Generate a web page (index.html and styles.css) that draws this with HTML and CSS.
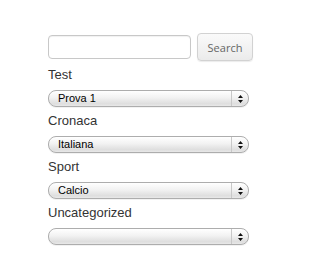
FILE: index.html
```html
<!DOCTYPE html>
<html>
<head>
<meta charset="utf-8">
<link rel="stylesheet" href="styles.css">
</head>
<body>
<div class="page">
  <form class="search-row">
    <input class="search-input" type="text">
    <button class="search-btn" type="button">Search</button>
  </form>
  <div class="field">
    <div class="label">Test</div>
    <div class="select"><span class="value">Prova 1</span><span class="arrows"><svg width="5" height="8" viewBox="0 0 5 8"><path d="M2.5 0 L5 3 L0 3 Z M0 5 L5 5 L2.5 8 Z" fill="#111"/></svg></span></div>
  </div>
  <div class="field">
    <div class="label">Cronaca</div>
    <div class="select"><span class="value">Italiana</span><span class="arrows"><svg width="5" height="8" viewBox="0 0 5 8"><path d="M2.5 0 L5 3 L0 3 Z M0 5 L5 5 L2.5 8 Z" fill="#111"/></svg></span></div>
  </div>
  <div class="field">
    <div class="label">Sport</div>
    <div class="select"><span class="value">Calcio</span><span class="arrows"><svg width="5" height="8" viewBox="0 0 5 8"><path d="M2.5 0 L5 3 L0 3 Z M0 5 L5 5 L2.5 8 Z" fill="#111"/></svg></span></div>
  </div>
  <div class="field">
    <div class="label">Uncategorized</div>
    <div class="select"><span class="value"></span><span class="arrows"><svg width="5" height="8" viewBox="0 0 5 8"><path d="M2.5 0 L5 3 L0 3 Z M0 5 L5 5 L2.5 8 Z" fill="#111"/></svg></span></div>
  </div>
</div>
</body>
</html>
```
FILE: styles.css
```css
html, body {
  margin: 0;
  padding: 0;
  background: #fff;
}
body {
  font-family: "Liberation Sans", Arial, sans-serif;
  color: #333;
}
.page {
  padding: 33px 0 0 48px;
  width: 206px;
}
.search-row {
  display: flex;
  align-items: center;
  gap: 6px;
  margin: 0;
  height: 28px;
}
.search-input {
  box-sizing: border-box;
  width: 143px;
  height: 24px;
  margin: 0;
  border: 1px solid #c8c8c8;
  border-radius: 4px;
  background: #fff;
  box-shadow: inset 0 1px 1px rgba(0,0,0,0.06);
  outline: none;
}
.search-btn {
  box-sizing: border-box;
  width: 56px;
  height: 28px;
  margin: 0;
  padding: 0;
  border: 1px solid #d2d2d2;
  border-radius: 4px;
  background: linear-gradient(#fafafa, #ebebeb);
  box-shadow: 0 1px 1px rgba(0,0,0,0.08);
  font-family: "Open Sans", "Liberation Sans", sans-serif;
  font-size: 11px;
  color: #666;
}
.field {
  margin-top: 4px;
}
.field + .field {
  margin-top: 0;
}
.label {
  font-size: 13px;
  line-height: 20px;
  color: #333;
  margin-bottom: 5px;
}
.select {
  box-sizing: border-box;
  display: flex;
  align-items: stretch;
  width: 201px;
  height: 17px;
  margin-bottom: 4px;
  border: 1px solid #adadad;
  border-radius: 8px;
  background: linear-gradient(#ffffff, #f2f2f2 45%, #dedede 85%, #e8e8e8);
  box-shadow: 0 1px 0 rgba(0,0,0,0.05);
}
.value {
  flex: 1;
  padding-left: 9px;
  font-family: "Liberation Sans", Arial, sans-serif;
  font-size: 11px;
  line-height: 15px;
  color: #000;
}
.arrows {
  width: 16px;
  border-left: 1px solid #c8c8c8;
  display: flex;
  align-items: center;
  justify-content: center;
}
.arrows svg {
  display: block;
}
```
